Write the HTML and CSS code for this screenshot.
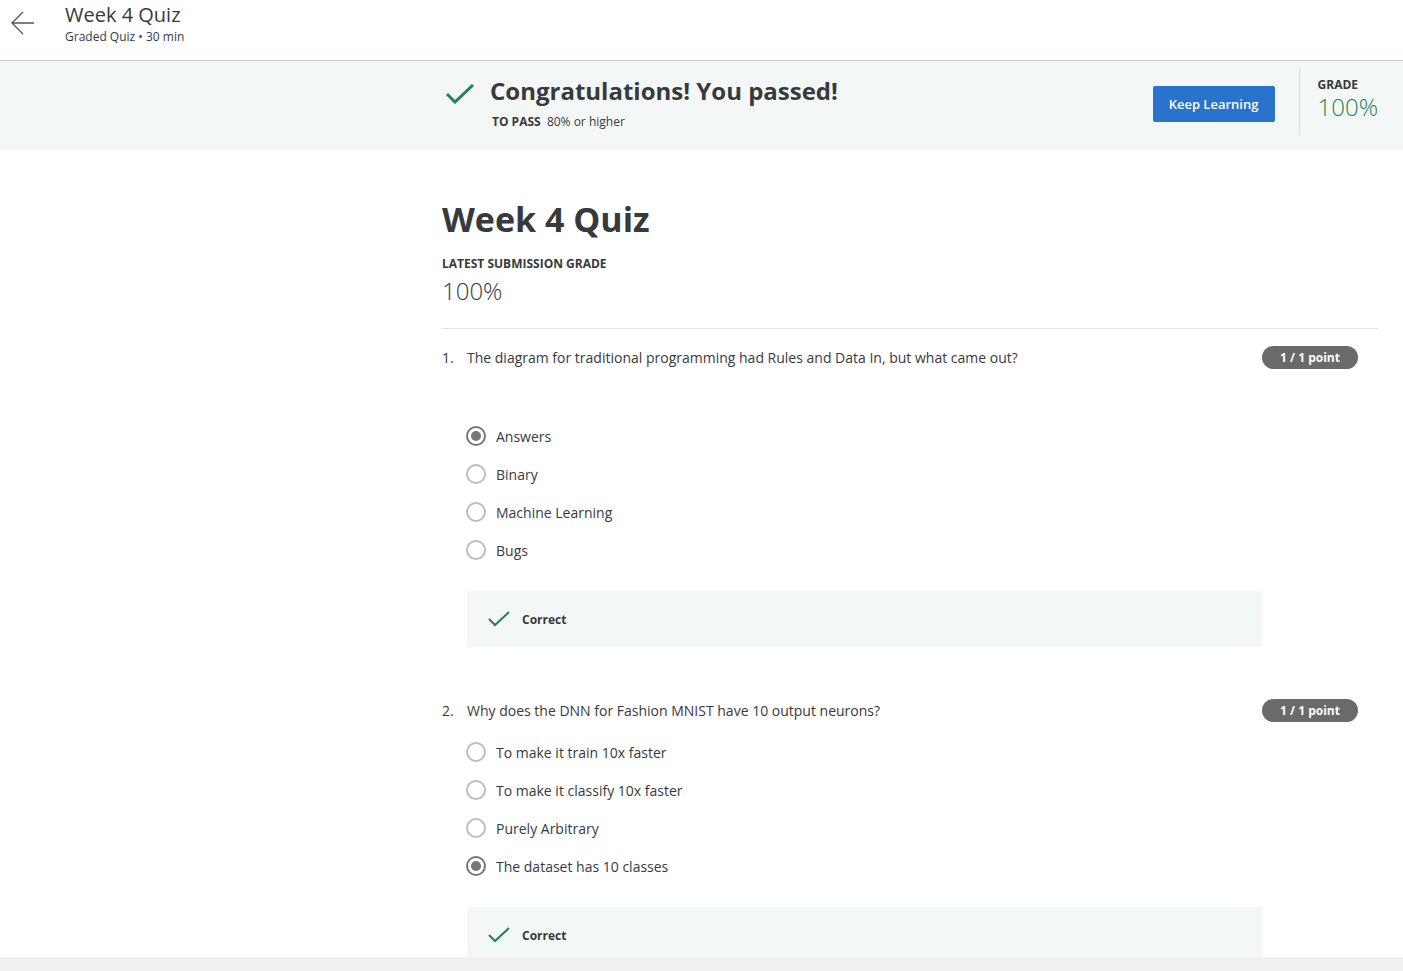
FILE: index.html
```html
<!DOCTYPE html>
<html lang="en">
<head>
<meta charset="utf-8">
<title>Week 4 Quiz</title>
<link rel="stylesheet" href="styles.css">
</head>
<body>
<div class="page">
  <header class="topbar">
    <button class="back" aria-label="Back">
      <svg width="26" height="26" viewBox="0 0 26 26"><path d="M24 13H2M13 2L2 13l11 11" fill="none" stroke="#555" stroke-width="1.3"/></svg>
    </button>
    <div class="top-titles">
      <div class="top-title">Week 4 Quiz</div>
      <div class="top-sub">Graded Quiz • 30 min</div>
    </div>
  </header>

  <section class="banner">
    <div class="banner-main">
      <svg class="banner-check" width="30" height="20" viewBox="0 0 30 20"><path d="M2 10l8 8L28 1" fill="none" stroke="#1f8354" stroke-width="3"/></svg>
      <div>
        <div class="congrats">Congratulations! You passed!</div>
        <div class="topass"><b>TO PASS</b>&nbsp; 80% or higher</div>
      </div>
    </div>
    <div class="banner-side">
      <button class="keep">Keep Learning</button>
      <div class="grade">
        <div class="grade-label">GRADE</div>
        <div class="grade-val">100%</div>
      </div>
    </div>
  </section>

  <main class="content">
    <h1 class="quiz-title">Week 4 Quiz</h1>
    <div class="latest-label">LATEST SUBMISSION GRADE</div>
    <div class="latest-val">100%</div>

    <div class="question first">
      <div class="q-head">
        <span class="q-num">1.</span>
        <span class="q-text">The diagram for traditional programming had Rules and Data In, but what came out?</span>
        <span class="badge">1 / 1 point</span>
      </div>
      <ul class="options q1">
        <li><span class="radio on"></span>Answers</li>
        <li><span class="radio"></span>Binary</li>
        <li><span class="radio"></span>Machine Learning</li>
        <li><span class="radio"></span>Bugs</li>
      </ul>
      <div class="feedback">
        <svg width="22" height="16" viewBox="0 0 22 16"><path d="M1 8l6 6L21 1" fill="none" stroke="#1f8354" stroke-width="2"/></svg>
        <span>Correct</span>
      </div>
    </div>

    <div class="question">
      <div class="q-head">
        <span class="q-num">2.</span>
        <span class="q-text">Why does the DNN for Fashion MNIST have 10 output neurons?</span>
        <span class="badge">1 / 1 point</span>
      </div>
      <ul class="options">
        <li><span class="radio"></span>To make it train 10x faster</li>
        <li><span class="radio"></span>To make it classify 10x faster</li>
        <li><span class="radio"></span>Purely Arbitrary</li>
        <li><span class="radio on"></span>The dataset has 10 classes</li>
      </ul>
      <div class="feedback">
        <svg width="22" height="16" viewBox="0 0 22 16"><path d="M1 8l6 6L21 1" fill="none" stroke="#1f8354" stroke-width="2"/></svg>
        <span>Correct</span>
      </div>
    </div>
  </main>
</div>
<div class="bottombar"></div>
</body>
</html>
```
FILE: styles.css
```css
* { box-sizing: border-box; }
html, body { margin: 0; padding: 0; }
body {
  font-family: "Open Sans", "Noto Sans", sans-serif;
  color: #373a3c;
  background: #fff;
  height: 100vh;
  display: flex;
  flex-direction: column;
  overflow: hidden;
}
.page { flex: 1; overflow: hidden; }
.bottombar { height: 14px; background: #f0f0f0; flex: none; }

.topbar {
  height: 61px;
  border-bottom: 1px solid #c8c8c8;
  display: flex;
  align-items: flex-start;
}
.back {
  border: 0; background: none; padding: 0;
  margin: 10px 0 0 10px;
  width: 26px; height: 26px;
  cursor: pointer;
}
.top-titles { margin-left: 29px; padding-top: 3px; }
.top-title { font-size: 20px; line-height: 24px; color: #373a3c; }
.top-sub { font-size: 12px; line-height: 16px; margin-top: 2px; color: #373a3c; }

.banner {
  height: 89px;
  background: #f3f8f6;
  display: flex;
  justify-content: space-between;
}
.banner-main {
  margin-left: 445px;
  display: flex;
  align-items: flex-start;
  padding-top: 14px;
}
.banner-check { margin-top: 9px; }
.congrats {
  font-size: 24px; font-weight: 700; line-height: 32px;
  margin-left: 15px; color: #373a3c;
}
.topass { font-size: 12px; line-height: 16px; margin: 7px 0 0 17px; }
.topass b { font-weight: 700; }
.banner-side { display: flex; align-items: flex-start; }
.keep {
  background: #2a73cc; color: #fff;
  border: 0; border-radius: 2px;
  font-family: inherit; font-size: 13px; font-weight: 600;
  width: 122px; height: 36px;
  margin-top: 25px;
}
.grade {
  margin-left: 24px;
  border-left: 1px solid #dcdcdc;
  height: 67px;
  margin-top: 7px;
  padding: 9px 25px 0 18px;
}
.grade-label { font-size: 12px; font-weight: 700; line-height: 16px; }
.grade-val { font-size: 24px; line-height: 28px; color: #1f8354; font-weight: 300; }

.content { margin-left: 442px; width: 936px; padding-top: 49px; }
.quiz-title { font-size: 34px; font-weight: 700; line-height: 40px; margin: 0; color: #373a3c; }
.latest-label { font-size: 12px; font-weight: 700; line-height: 16px; margin-top: 17px; }
.latest-val { font-size: 24px; line-height: 28px; margin-top: 5px; font-weight: 300; }

.question.first { border-top: 1px solid #e1e1e1; margin-top: 23px; padding-top: 17px; }
.question { padding-top: 52px; }
.q-head { display: flex; align-items: center; font-size: 14px; line-height: 20px; padding-right: 20px; }
.q-num { width: 25px; }
.q-text { flex: 1; }
.badge {
  background: #6a6a6a; color: #fff;
  font-size: 12px; font-weight: 700;
  border-radius: 12px;
  width: 96px; height: 23px;
  display: flex; align-items: center; justify-content: center;
}
.options { list-style: none; margin: 0; padding: 0 0 0 24px; }
.options.q1 { margin-top: 48px; }
.options:not(.q1) { margin-top: 11px; }
.options li {
  display: flex; align-items: center;
  height: 38px; font-size: 14px;
}
.radio {
  width: 20px; height: 20px; border-radius: 50%;
  border: 2px solid #bdbdbd;
  margin-right: 10px;
  display: inline-flex; align-items: center; justify-content: center;
}
.radio.on { border-color: #777; }
.radio.on::after {
  content: ""; width: 10px; height: 10px; border-radius: 50%; background: #777;
}
.feedback {
  margin: 22px 116px 0 25px;
  height: 56px;
  background: #f3f8f6;
  display: flex; align-items: center;
  padding-left: 21px;
  font-size: 12px; font-weight: 700;
}
.feedback svg { margin-right: 12px; }
```
